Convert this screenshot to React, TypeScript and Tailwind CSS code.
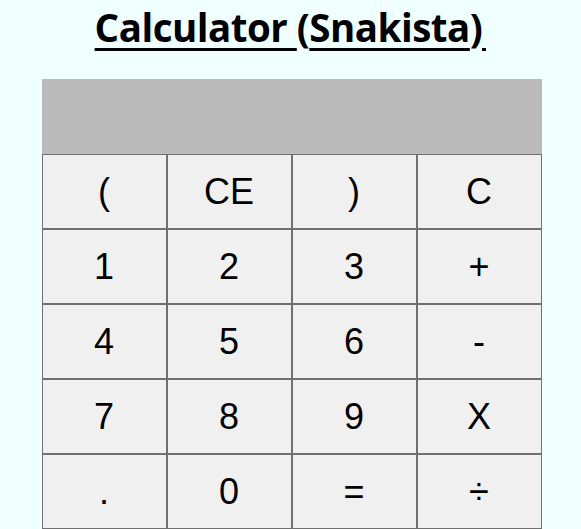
import React from 'react';

const KEYS = ['(', 'CE', ')', 'C', '1', '2', '3', '+', '4', '5', '6', '-', '7', '8', '9', 'X', '.', '0', '=', '÷'];

const App: React.FC = () => {
  return (
    <div className="min-h-[529px] w-full bg-[#f0ffff] flex flex-col items-center">
      {/* Title */}
      <h1 className="mt-[3px] h-[76px] text-[38.5px] font-bold text-black leading-[48px] font-['Open_Sans',sans-serif] tracking-[-0.5px]">
        <span className="underline decoration-[3px] underline-offset-[6px]">Calculator </span>(
        <span className="underline decoration-[3px] underline-offset-[6px]">Snakista</span>)
        <span className="inline-block w-[4px] h-[3px] bg-black align-[-9px]" />
      </h1>

      {/* Calculator */}
      <div className="w-[500px] ml-[2px] flex flex-col">
        <div className="h-[75px] bg-[#bbbbbb]" />
        <div className="grid grid-cols-4">
          {KEYS.map((k) => (
            <button
              key={k}
              className="h-[75px] bg-[#f0f0f0] border border-[#707070] text-[36px] text-black font-['Liberation_Sans',Arial,sans-serif] flex items-center justify-center"
            >
              {k}
            </button>
          ))}
        </div>
      </div>
    </div>
  );
};

export default App;
